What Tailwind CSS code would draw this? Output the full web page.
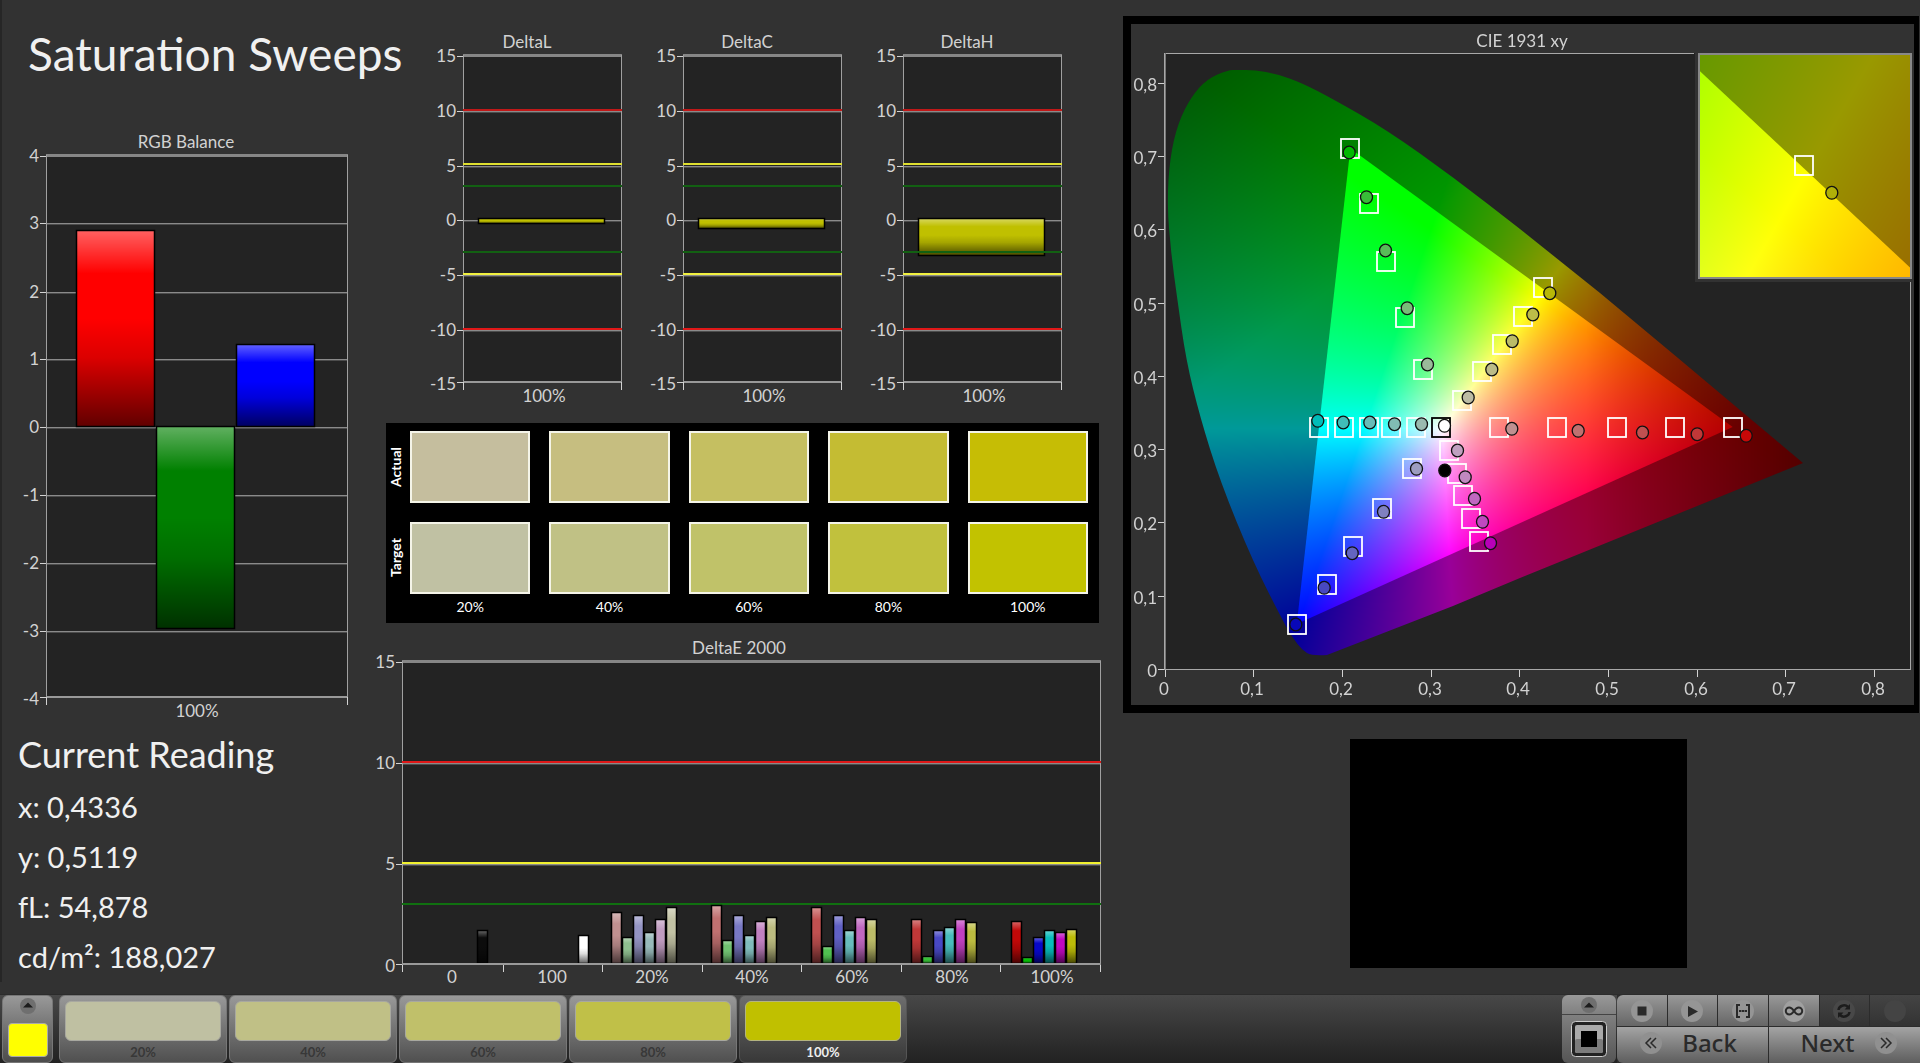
<!DOCTYPE html>
<html lang="en">
<head>
    <meta charset="UTF-8">
    <meta name="viewport" content="width=device-width, initial-scale=1.0">
    <title>Saturation Sweeps</title>
    <script src="https://cdn.jsdelivr.net/npm/@tailwindcss/browser@4"></script>
</head>
<body class="min-h-screen flex flex-col bg-[#323232] text-[#f0f0f0] font-['Lato',sans-serif]">
    <!-- Shared gloss for the chart bars -->
    <svg class="absolute w-0 h-0" aria-hidden="true">
        <defs>
            <linearGradient id="gloss" x1="0" y1="0" x2="0" y2="1">
                <stop offset="0" stop-color="#fff" stop-opacity=".38"/>
                <stop offset=".22" stop-color="#fff" stop-opacity="0"/>
                <stop offset=".45" stop-color="#000" stop-opacity="0"/>
                <stop offset=".65" stop-color="#000" stop-opacity=".14"/>
                <stop offset="1" stop-color="#000" stop-opacity=".62"/>
            </linearGradient>
        </defs>
    </svg>

    <main class="flex-1 grid grid-cols-[376fr_744fr_800fr] items-start">
        <!-- Left column -->
        <section class="min-w-0 border-l-2 border-[#262626]">
            <h1 class="pl-[26px] pt-[26px] text-[46px] leading-14 whitespace-nowrap">Saturation Sweeps</h1>
            <svg id="rgb" class="block w-full mt-[42px]" viewBox="2 124 374 600" role="img" aria-label="RGB Balance"></svg>
            <div class="pl-4 pt-[6px] text-[29px] leading-[50px]">
                <h2 class="text-[36px] leading-12">Current Reading</h2>
                <p class="pt-1">x: 0,4336</p>
                <p>y: 0,5119</p>
                <p>fL: 54,878</p>
                <p>cd/m²: 188,027</p>
            </div>
        </section>

        <!-- Middle column -->
        <section class="min-w-0">
            <div class="grid grid-cols-3 pt-5 pl-12 pr-9">
                <svg id="deltaL" class="block w-full" viewBox="0 20 220 391" role="img" aria-label="DeltaL"></svg>
                <svg id="deltaC" class="block w-full" viewBox="0 20 220 391" role="img" aria-label="DeltaC"></svg>
                <svg id="deltaH" class="block w-full" viewBox="0 20 220 391" role="img" aria-label="DeltaH"></svg>
            </div>

            <div id="swatches" class="mt-3 ml-[10px] mr-[21px] pt-2 pb-[6px] pr-[11px] bg-black text-white text-sm leading-5"></div>

            <svg id="deltaE" class="block w-full mt-2" viewBox="376 630 744 362" role="img" aria-label="DeltaE 2000"></svg>
        </section>

        <!-- Right column -->
        <section class="min-w-0">
            <div class="relative mt-4 ml-[3px] mr-px border-8 border-r-[5px] border-black">
                <canvas id="gamut" class="absolute inset-0 w-full h-full" width="783" height="681"></canvas>
                <svg id="cie" class="relative block w-full" viewBox="1131 24 783 681" role="img" aria-label="CIE 1931 xy"></svg>
            </div>
            <div class="mt-[26px] ml-[230px] mr-[233px] h-[229px] bg-black"></div>
        </section>
    </main>

    <footer class="h-[69px] flex items-stretch bg-linear-to-b from-[#484848] to-[#222] border-t border-[#2c2c2c] font-bold text-[13px]">
        <button class="ml-[2px] w-[51px] flex flex-col items-center justify-between pt-[2px] pb-[5px] rounded-md border border-[#777] bg-linear-to-b from-[#999] to-[#4c4c4c]" aria-label="Current color">
            <svg class="w-4 h-4" viewBox="0 0 16 16"><circle cx="8" cy="8" r="8" fill="#6f6f6f"/><path d="M3 9.500L8 4.500l5 5z" fill="#1c1c1c"/></svg>
            <span class="block w-10 h-[34px] rounded-sm border border-[#aaa] bg-[#ff0]"></span>
        </button>
        <div id="steps" class="flex gap-[2px] ml-[6px]"></div>

        <div class="ml-auto w-[54px] flex flex-col">
            <button class="h-5 flex items-center justify-center rounded-t-md bg-linear-to-b from-[#999] to-[#808080] border-b border-[#444]" aria-label="Expand">
                <svg class="w-4 h-4" viewBox="0 0 16 16"><circle cx="8" cy="8" r="8" fill="#6f6f6f"/><path d="M3 10.500L8 5.500l5 5z" fill="#1c1c1c"/></svg>
            </button>
            <button class="flex-1 flex items-center justify-center rounded-b-md bg-linear-to-b from-[#808080] to-[#555]" aria-label="Pattern window">
                <svg class="w-9 h-9" viewBox="0 0 36 36"><rect x=".5" y=".5" width="35" height="35" rx="4" fill="#222" stroke="#ccc"/><rect x="4" y="4" width="28" height="28" rx="2" fill="#aaa"/><rect x="4" y="18" width="28" height="14" rx="2" fill="#7c7c7c"/><rect x="10" y="10" width="16" height="16" fill="#000"/></svg>
            </button>
        </div>
        <div class="w-[303px] ml-px flex flex-col gap-px bg-[#2c2c2c]">
            <div class="h-[34px] grid grid-cols-6 gap-px">
                <button class="flex items-center justify-center rounded-tl-md bg-linear-to-b from-[#999] to-[#666]" aria-label="Stop">
                    <svg class="w-[22px] h-[22px]" viewBox="0 0 22 22"><circle cx="11" cy="11" r="11" fill="#959595"/><path d="M6.500 6.500h9v9h-9z" fill="#2a2a2a"/></svg>
                </button>
                <button class="flex items-center justify-center bg-linear-to-b from-[#999] to-[#666]" aria-label="Play">
                    <svg class="w-[22px] h-[22px]" viewBox="0 0 22 22"><circle cx="11" cy="11" r="11" fill="#959595"/><path d="M7 6l10 5.500L7 17z" fill="#2a2a2a"/></svg>
                </button>
                <button class="flex items-center justify-center bg-linear-to-b from-[#999] to-[#666]" aria-label="Range">
                    <svg class="w-[22px] h-[22px]" viewBox="0 0 22 22"><circle cx="11" cy="11" r="11" fill="#959595"/><path d="M8 5H5v12h3M14 5h3v12h-3" fill="none" stroke="#2a2a2a" stroke-width="2"/><path d="M7 11h2.500M10 11h2M12.500 11H15" stroke="#2a2a2a" stroke-width="2"/></svg>
                </button>
                <button class="flex items-center justify-center bg-linear-to-b from-[#999] to-[#666]" aria-label="Loop">
                    <svg class="w-[22px] h-[22px]" viewBox="0 0 22 22"><circle cx="11" cy="11" r="11" fill="#a0a0a0"/><path d="M11 11C9 8 7.500 7.500 6.300 7.500a3.500 3.500 0 0 0 0 7C7.500 14.500 9 14 11 11s3.500-3.500 4.700-3.500a3.500 3.500 0 0 1 0 7C14.500 14.500 13 14 11 11z" fill="none" stroke="#2a2a2a" stroke-width="2"/></svg>
                </button>
                <button class="flex items-center justify-center bg-linear-to-b from-[#444] to-[#333]" aria-label="Refresh">
                    <svg class="w-[22px] h-[22px]" viewBox="0 0 22 22"><circle cx="11" cy="11" r="11" fill="#484848"/><path d="M5.500 10a5.500 5 0 0 1 9.500-3M16.500 12a5.500 5 0 0 1-9.500 3" fill="none" stroke="#1c1c1c" stroke-width="2.500"/><path d="M17 4v5.500h-5.500zM5 18v-5.500h5.500z" fill="#1c1c1c"/></svg>
                </button>
                <button class="flex items-center justify-center bg-linear-to-b from-[#444] to-[#333]" aria-label="Record">
                    <svg class="w-[22px] h-[22px]" viewBox="0 0 22 22"><circle cx="11" cy="11" r="11" fill="#444"/></svg>
                </button>
            </div>
            <div class="flex-1 grid grid-cols-2 gap-px text-[#2a2a2a] text-2xl leading-8 font-medium font-['Noto_Sans',sans-serif]">
                <button class="flex items-center justify-center gap-5 pr-2 pb-1 rounded-bl-md bg-linear-to-b from-[#a4a4a4] to-[#5e5e5e]">
                    <svg class="w-[22px] h-[22px]" viewBox="0 0 22 22"><circle cx="11" cy="11" r="11" fill="#909090"/><path d="M11 6l-5 5 5 5M16 6l-5 5 5 5" fill="none" stroke="#2a2a2a" stroke-width="1.500"/></svg>
                    Back
                </button>
                <button class="flex items-center justify-center gap-5 pl-2 pb-1 bg-linear-to-b from-[#a4a4a4] to-[#5e5e5e]">
                    Next
                    <svg class="w-[22px] h-[22px]" viewBox="0 0 22 22"><circle cx="11" cy="11" r="11" fill="#909090"/><path d="M6 6l5 5-5 5M11 6l5 5-5 5" fill="none" stroke="#2a2a2a" stroke-width="1.500"/></svg>
                </button>
            </div>
        </div>
    </footer>

    <script>
        const line = (x, y, w, h, fill) => `<rect x="${x}" y="${y}" width="${w}" height="${h}" fill="${fill}"/>`;
        const label = (x, y, text, anchor = 'middle') =>
            `<text x="${x}" y="${y}" text-anchor="${anchor}" font-size="17" fill="#d2d2d2">${text}</text>`;
        const bar = (x, y, w, h, color) =>
            `<rect x="${x + .5}" y="${y + .5}" width="${w - 1}" height="${h - 1}" fill="${color}"/>` +
            `<rect x="${x + .5}" y="${y + .5}" width="${w - 1}" height="${h - 1}" fill="url(#gloss)" stroke="#000" stroke-width="1.500"/>`;

        // Frame, gridlines and value labels of a chart
        function frame(c) {
            let out = line(c.left, c.top, c.right - c.left, c.bottom - c.top, '#232323');
            c.ticks.forEach(([text, y]) => {
                const at = Math.min(y, c.bottom);
                if (y > c.top + 4 && y < c.bottom) out += line(c.left, y, c.right - c.left, 1, '#8a8a8a') + line(c.left, y + 1, c.right - c.left, 1, '#4c4c4c');
                out += line(c.left - 6, at, 6, 1, '#d2d2d2') + label(c.left - 7, y + 6, text, 'end');
            });
            out += line(c.left, c.top - 1, c.right - c.left, 3, '#868686');
            out += line(c.left, c.top, 1, c.bottom - c.top, '#a0a0a0') + line(c.right - 1, c.top, 1, c.bottom - c.top, '#a0a0a0');
            out += line(c.left, c.bottom - 1, c.right - c.left, 2, '#999');
            c.marks.forEach(x => out += line(x, c.bottom, 1, 8, '#d2d2d2'));
            return out + label(c.titleX, c.top - 7, c.title);
        }

        // RGB balance
        document.getElementById('rgb').innerHTML =
            frame({ left: 46, right: 348, top: 155, bottom: 697, title: 'RGB Balance', titleX: 186, marks: [46, 347],
                ticks: [['4', 156], ['3', 223], ['2', 292], ['1', 359], ['0', 427], ['-1', 495], ['-2', 563], ['-3', 631], ['-4', 699]] }) +
            bar(76, 230, 79, 197, '#f00') + bar(156, 426, 79, 203, '#008000') + bar(236, 344, 79, 83, '#00f') +
            label(197, 717, '100%');

        // DeltaL, DeltaC, DeltaH
        [['L', 6], ['C', 11], ['H', 38]].forEach(([name, h]) => {
            let out = frame({ left: 39, right: 198, top: 55, bottom: 382, title: 'Delta' + name, titleX: 103, marks: [39, 197],
                ticks: [['15', 56], ['10', 111], ['5', 166], ['0', 220], ['-5', 275], ['-10', 330], ['-15', 384]] });
            out += bar(54, 218, 127, h, '#c0c000');
            [[109, '#c01818'], [328, '#e01818']].forEach(([y, c]) => out += line(39, y, 159, 2, c));
            [[163, '#e0e030'], [273, '#f0f040']].forEach(([y, c]) => out += line(39, y, 159, 2, c));
            [185, 251].forEach(y => out += line(39, y, 159, 2, '#126012'));
            document.getElementById('delta' + name).innerHTML = out + label(120, 402, '100%');
        });

        // DeltaE 2000
        const groups = [
            [611, [911, 936, 914, 931, 918, 906], ['#c09090', '#8fbf8f', '#9494c4', '#98baba', '#c09cc0', '#c2c2a4']],
            [711, [904, 939, 914, 934, 920, 916], ['#c07070', '#70c070', '#7878c4', '#80bcbc', '#c080c0', '#bcbc80']],
            [811, [906, 945, 914, 929, 916, 918], ['#c05050', '#50c050', '#6060c4', '#68bcbc', '#c068c0', '#bcbc68']],
            [911, [918, 955, 929, 926, 918, 921], ['#c03838', '#38c038', '#4848c4', '#48bcbc', '#c040c0', '#bcbc40']],
            [1011, [920, 956, 936, 929, 931, 928], ['#c00808', '#08c008', '#0808c8', '#08bcbc', '#c008c0', '#bcbc08']]
        ];
        let bars = bar(477, 929, 11, 34, '#0c0c0c') + bar(578, 934, 11, 29, '#fff');
        groups.forEach(([x, tops, colors]) => tops.forEach((y, i) => bars += bar(x + i * 11, y, 11, 963 - y, colors[i])));
        document.getElementById('deltaE').innerHTML =
            frame({ left: 402, right: 1101, top: 660, bottom: 963, title: 'DeltaE 2000', titleX: 739, marks: [402, 503, 602, 702, 801, 901, 1000, 1100],
                ticks: [['15', 661], ['10', 762], ['5', 863], ['0', 965]] }) +
            line(402, 760, 699, 2, '#e01818') + line(402, 861, 699, 2, '#f0f030') + line(402, 902, 699, 2, '#107010') + bars +
            line(402, 962, 699, 2, '#999') +
            ['0', '100', '20%', '40%', '60%', '80%', '100%'].map((t, i) => label(452 + i * 100, 982, t)).join('');

        // Actual and target swatches
        const rows = { Actual: ['#c5be9e', '#c6be80', '#c5bf61', '#c4bc33', '#c6bd05'], Target: ['#c0c1a3', '#c0c185', '#c0c269', '#c1c13d', '#c2c200'] };
        document.getElementById('swatches').innerHTML = Object.entries(rows).map(([name, colors]) =>
            `<div class="flex mb-[19px] last:mb-0"><span class="w-6 pl-[2px] [writing-mode:vertical-rl] rotate-180 text-center font-bold">${name}</span><div class="flex-1 grid grid-cols-5 gap-x-[19px]">` +
            colors.map(c => `<div class="h-[72px] border-2 border-[#f4f4e8]" style="background:${c}"></div>`).join('') + '</div></div>').join('') +
            '<div class="-mt-4 pl-6 grid grid-cols-5 gap-x-[19px] text-center">' +
            ['20%', '40%', '60%', '80%', '100%'].map(t => `<span>${t}</span>`).join('') + '</div>';

        // Saturation steps
        document.getElementById('steps').innerHTML = [['20%', '#bfc0a2'], ['40%', '#c0c086'], ['60%', '#c0c06a'], ['80%', '#c0c048']].map(([t, c]) =>
            `<button class="w-[168px] flex flex-col items-center px-[5px] pt-[5px] rounded-md border border-[#777] bg-linear-to-b from-[#999] to-[#505050] text-[#383838]">
                <span class="block w-full h-[42px] rounded-md border border-[#a8a8a0]" style="background:${c}"></span><span class="pt-px leading-5">${t}</span></button>`).join('') +
            `<button class="w-[168px] flex flex-col items-center px-[5px] pt-[5px] rounded-md border border-[#555] bg-linear-to-b from-[#6e6e6e] to-[#383838] text-[#eee]">
                <span class="block w-full h-[42px] rounded-md border border-[#b4b480] bg-[#c0c000]"></span><span class="pt-px leading-5">100%</span></button>`;

        // CIE 1931 diagram
        const X = x => 1164.7 + x * 886.5, Y = y => 669 - y * 733;
        const gamutR = [.6407, .33], gamutG = [.2094, .71], gamutB = [.149, .0615];
        const clamp = v => Math.max(0, Math.min(1, v));

        function shade(x, y, inside) {
            y = Math.max(y, .001);
            const a = x / y, b = (1 - x - y) / y;
            let rgb = [3.2406 * a - 1.5372 - .4986 * b, -.9689 * a + 1.8758 + .0415 * b, .0557 * a - .204 + 1.057 * b].map(v => Math.max(0, v));
            const max = Math.max(...rgb);
            let k = inside ? 255 : 153;
            if (x > .475) k *= 1 - 1.85 * (x - .475);
            if (!inside) k *= 1 - .95 * clamp(y - .9 * x - .35);
            return rgb.map(v => Math.pow(v / max, 1 / 1.15) * k);
        }

        // Paints a w by h pixel map whose corners are given in xy
        function chroma(w, h, x0, y0, dx, dy, inside) {
            const c = document.createElement('canvas');
            c.width = w; c.height = h;
            const ctx = c.getContext('2d'), img = ctx.createImageData(w, h);
            for (let j = 0; j < h; j++) for (let i = 0; i < w; i++) {
                img.data.set([...shade(x0 + i * dx, y0 - j * dy, inside), 255], (j * w + i) * 4);
            }
            ctx.putImageData(img, 0, 0);
            return c;
        }

        const ctx = document.getElementById('gamut').getContext('2d');
        ctx.translate(-1131, -24);
        ctx.fillStyle = '#232323';
        ctx.fillRect(1165, 53, 745, 616);

        const locus = [[1237, 70], [1255, 70], [1277, 74], [1302, 83], [1333, 99], [1387, 130], [1453, 177], [1520, 229], [1600, 293], [1678, 358], [1803, 463],
            [1520, 578], [1453, 606], [1327, 655], [1312, 656], [1302, 650], [1293, 638], [1285, 625], [1253, 562], [1220, 481], [1200, 417], [1186, 360],
            [1177, 297], [1171, 253], [1167, 203], [1170, 157], [1178, 123], [1191, 97], [1207, 79], [1228, 70]];
        ctx.save();
        ctx.beginPath();
        ctx.moveTo(1232, 70);
        locus.forEach((p, i) => {
            const n = locus[(i + 1) % locus.length];
            if (i >= 7 && i <= 13) ctx.lineTo(...p);
            else ctx.quadraticCurveTo(p[0], p[1], (p[0] + n[0]) / 2, (p[1] + n[1]) / 2);
        });
        ctx.closePath();
        ctx.clip();
        ctx.drawImage(chroma(783, 681, (1131 - 1164.7) / 886.5, (669 - 24) / 733, 1 / 886.5, 1 / 733, false), 1131, 24);
        ctx.beginPath();
        [gamutR, gamutG, gamutB].forEach(([x, y]) => ctx.lineTo(X(x), Y(y)));
        ctx.closePath();
        ctx.clip();
        ctx.drawImage(chroma(783, 681, (1131 - 1164.7) / 886.5, (669 - 24) / 733, 1 / 886.5, 1 / 733, true), 1131, 24);
        ctx.restore();

        // Magnified view round the current target
        const zx = x => 1804.7 + (x - .4267) * 3500, zy = y => 165.5 - (y - .5195) * 3710;
        ctx.fillStyle = '#323232';
        ctx.fillRect(1695, 52, 219, 230);
        ctx.drawImage(chroma(210, 222, .4267 - .03, .5195 + .03, 1 / 3500, 1 / 3710, false), 1700, 55);
        ctx.save();
        ctx.beginPath();
        ctx.rect(1700, 55, 210, 222);
        ctx.clip();
        ctx.beginPath();
        [gamutR, gamutG, gamutB].forEach(([x, y]) => ctx.lineTo(zx(x), zy(y)));
        ctx.clip();
        ctx.drawImage(chroma(210, 222, .4267 - .03, .5195 + .03, 1 / 3500, 1 / 3710, true), 1700, 55);
        ctx.restore();

        const box = (x, y, c = '#fff') => `<rect x="${Math.round(x) - 9}" y="${Math.round(y) - 9}" width="18" height="19" fill="none" stroke="${c}" stroke-width="1.800"/>`;
        const dot = (x, y, c) => `<ellipse cx="${x + .5}" cy="${y + .5}" rx="6" ry="6.400" fill="${c}" stroke="#111" stroke-width="1.300"/>`;
        const sweeps = [
            { boxes: [[1422.7, 369], [1405.3, 317.3], [1386.3, 261.3], [1369, 203], [1350.3, 148.3]], dots: [[1427, 364], [1406.7, 307.7], [1385, 250], [1366, 196.7], [1348.7, 152]], colors: ['#9aba9a', '#78bc78', '#58bc58', '#38bc38', '#00b800'] },
            { boxes: [[1416.3, 427], [1391.3, 427], [1369, 427], [1344.3, 427], [1319, 427]], dots: [[1421, 423.7], [1394, 423.7], [1369.3, 422], [1342.7, 422], [1317.3, 420.3]], colors: ['#9abaaf', '#80bcb4', '#68bcb8', '#40bcb8', '#00bcb8'] },
            { boxes: [[1499.3, 427], [1557.3, 427], [1616.7, 427], [1674.7, 427], [1732.7, 427]], dots: [[1511.3, 428.3], [1577.7, 430.3], [1642, 432], [1696.7, 433.7], [1745.7, 435.3]], colors: ['#c09090', '#c07070', '#c05050', '#c03838', '#c80808'] },
            { boxes: [[1461.7, 400.3], [1481.7, 370.7], [1502.3, 343.7], [1523, 315.7], [1543, 287.3]], dots: [[1467.7, 397], [1491.3, 369], [1511.7, 340.7], [1532.3, 314], [1549.3, 292.7]], colors: ['#bcbca4', '#bcbc88', '#bcbc68', '#bcbc48', '#b8b808'] },
            { boxes: [[1449.3, 450], [1457, 473], [1463.3, 495], [1471, 518], [1479, 541.3]], dots: [[1457, 450], [1464.7, 476.7], [1474, 498.3], [1482, 521.3], [1490, 542.7]], colors: ['#c0a0c0', '#c088c0', '#c068c0', '#c048c0', '#b800b8'] },
            { boxes: [[1411.7, 468], [1381.7, 507.7], [1353.3, 546], [1327, 584.3], [1296.7, 624]], dots: [[1416, 468.3], [1383, 511.3], [1351.7, 552.7], [1323.7, 587.3], [1295.3, 624]], colors: ['#9c9cc0', '#8080c0', '#6464c0', '#4848c0', '#0808b8'] }
        ];
        let cie = line(1164, 53, 530, 1, '#a8a8a8') + line(1164, 53, 1, 616, '#a8a8a8') + line(1165, 53, 1, 616, '#777') +
            line(1164, 669, 747, 1, '#a8a8a8') + line(1910, 282, 1, 388, '#a8a8a8');
        [0, 1, 2, 3, 4, 5, 6, 7, 8].forEach(i => {
            const text = i ? '0,' + i : '0';
            cie += line(1158, Math.round(Y(i / 10)), 6, 1, '#d2d2d2') + label(1157, Math.round(Y(i / 10)) + 8, text, 'end');
            cie += line(Math.round(X(i / 10)), 670, 1, 7, '#d2d2d2') + label(Math.round(X(i / 10)) - 1, 695, text);
        });
        cie += label(1522, 47, 'CIE 1931 xy');
        cie += sweeps.map(s => s.boxes.map(p => box(...p)).join('')).join('') + box(1441, 427, '#000');
        cie += sweeps.map(s => s.dots.map((p, i) => dot(...p, s.colors[i])).join('')).join('');
        cie += dot(1444, 425.3, '#fff') + dot(1444.3, 470, '#000');
        cie += '<rect x="1699" y="54" width="212" height="224" fill="none" stroke="#888" stroke-width="2"/>' + box(1804, 165) + dot(1831.3, 192.3, '#b0b008');
        document.getElementById('cie').innerHTML = cie;
    </script>
</body>
</html>
